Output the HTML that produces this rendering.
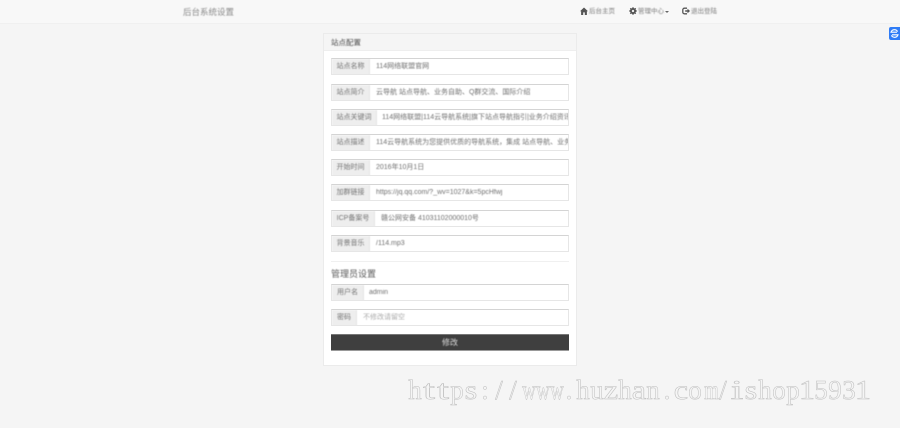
<!DOCTYPE html>
<html lang="zh">
<head>
<meta charset="utf-8">
<style>
html,body{margin:0;padding:0}
body{width:900px;height:428px;background:#f5f5f5;position:relative;overflow:hidden;font-family:"Liberation Sans","Noto Sans CJK SC",sans-serif;color:#666}
.a{position:absolute;white-space:nowrap}
.t{filter:blur(.45px)}
#nav{left:0;top:0;width:900px;height:23px;background:#f8f8f8;border-bottom:1px solid #f0f0f0}
#panel{left:323px;top:33px;width:252px;height:331px;background:#fff;border:1px solid #ebebeb}
#ph{left:324px;top:34px;width:252px;height:17px;background:#f5f5f5;border-bottom:1px solid #eeeeee;box-sizing:border-box;font-size:7.5px;line-height:17px;padding-left:7px;color:#4a4a4a}
.row{position:absolute;left:331px;width:238px;height:17px;box-sizing:border-box;border:1px solid #e6e6e6;border-top-color:#d4d4d4;background:#fff;overflow:hidden}
.lab{position:absolute;left:0;top:0;height:16px;background:#eeeeee;border-right:1px solid #e6e6e6;font-size:7px;line-height:16px;text-align:center;color:#747474;box-sizing:border-box;filter:blur(.45px)}
.val{position:absolute;top:0;font-size:7px;line-height:16px;color:#707070;white-space:nowrap;filter:blur(.45px)}
.nv{font-size:6.5px;color:#7c7c7c;top:7px;line-height:10px}
#wm{left:408px;top:376px;font-family:"Liberation Serif",serif;font-size:27px;line-height:28px;color:#f5f5f5;-webkit-text-stroke:.5px #bdbdbd}
#wm span{display:inline-block;width:14px;text-align:center}
#wm .n{transform:scaleX(.7)}
#wm .w1{transform:scaleX(1.6)}
#wm .w2{transform:scaleX(1.2)}
#wm .w3{transform:scaleX(1.7)}
</style>
</head>
<body>
<div id="nav" class="a"></div>
<div class="a t" style="left:183px;top:5px;font-size:8.5px;line-height:14px;color:#8a8a8a">后台系统设置</div>

<svg class="a" style="left:580px;top:7px" width="8" height="8" viewBox="0 0 8 8"><path d="M4 .5 0 4.2h1.1V8h2.1V5.4h1.6V8h2.1V4.2H8z" fill="#555"/></svg>
<div class="a t nv" style="left:589px">后台主页</div>
<svg class="a" style="left:629px;top:7px" width="8" height="8" viewBox="0 0 8 8"><circle cx="4" cy="4" r="2.3" fill="none" stroke="#555" stroke-width="1.6"/><path d="M4 0v8M0 4h8M1.2 1.2l5.6 5.6M6.8 1.2 1.2 6.8" stroke="#555" stroke-width="1"/><circle cx="4" cy="4" r="1.1" fill="#f8f8f8"/></svg>
<div class="a t nv" style="left:638px">管理中心</div>
<div class="a" style="left:665px;top:11px;width:0;height:0;border:2px solid transparent;border-top-color:#666;border-bottom:0"></div>
<svg class="a" style="left:682px;top:7px" width="8" height="8" viewBox="0 0 8 8"><path d="M5 1.2H2.4A1.6 1.6 0 0 0 .8 2.8v2.4a1.6 1.6 0 0 0 1.6 1.6H5" fill="none" stroke="#555" stroke-width="1.3"/><path d="M3.2 3.2h2.3V1.6L8 4 5.5 6.4V4.8H3.2z" fill="#555"/></svg>
<div class="a t nv" style="left:691px">退出登陆</div>

<div class="a" style="left:889px;top:27px;width:11px;height:13px;background:#2f7cf6;border-radius:2px 0 0 2px"></div>
<svg class="a" style="left:890px;top:29px" width="9" height="9" viewBox="0 0 9 9"><path d="M7.6 2.6A3.6 3.6 0 0 0 1 3.2h6M1.4 6.4A3.6 3.6 0 0 0 8 5.8H2" fill="none" stroke="#fff" stroke-width="1.1"/></svg>

<div id="panel" class="a"></div>
<div id="ph" class="a"><span class="t" style="display:inline-block">站点配置</span></div>

<div class="row" style="top:58px"><div class="lab" style="width:38px">站点名称</div><div class="val" style="left:44px">114网络联盟官网</div></div>
<div class="row" style="top:84px"><div class="lab" style="width:38px">站点简介</div><div class="val" style="left:44px">云导航 站点导航、业务自助、Q群交流、国际介绍</div></div>
<div class="row" style="top:109px"><div class="lab" style="width:45px">站点关键词</div><div class="val" style="left:50px">114网络联盟|114云导航系统|旗下站点导航指引|业务介绍资讯|E</div></div>
<div class="row" style="top:134px"><div class="lab" style="width:38px">站点描述</div><div class="val" style="left:44px">114云导航系统为您提供优质的导航系统，集成 站点导航、业务</div></div>
<div class="row" style="top:159px"><div class="lab" style="width:38px">开始时间</div><div class="val" style="left:44px">2016年10月1日</div></div>
<div class="row" style="top:184px"><div class="lab" style="width:38px">加群链接</div><div class="val" style="left:44px">https://jq.qq.com/?_wv=1027&amp;k=5pcHfwj</div></div>
<div class="row" style="top:210px"><div class="lab" style="width:43px">ICP备案号</div><div class="val" style="left:49px">赣公网安备 41031102000010号</div></div>
<div class="row" style="top:235px"><div class="lab" style="width:38px">背景音乐</div><div class="val" style="left:44px">/114.mp3</div></div>

<div class="a" style="left:331px;top:261px;width:238px;height:1px;background:#f0f0f0"></div>
<div class="a t" style="left:331px;top:268px;font-size:9px;line-height:12px;color:#5c5c5c">管理员设置</div>

<div class="row" style="top:284px"><div class="lab" style="width:32px">用户名</div><div class="val" style="left:37px">admin</div></div>
<div class="row" style="top:309px"><div class="lab" style="width:25px">密码</div><div class="val" style="left:31px;color:#aaa">不修改请留空</div></div>

<div class="a" style="left:331px;top:334px;width:238px;height:17px;background:#3f3f3f;border-top:1px solid #777;border-bottom:1px solid #999;box-sizing:border-box"></div>
<div class="a t" style="left:331px;top:334px;width:238px;height:17px;font-size:8px;line-height:17px;text-align:center;color:#ddd">修改</div>

<div id="wm" class="a"><span>h</span><span class="w1">t</span><span class="w1">t</span><span>p</span><span class="w2">s</span><span>:</span><span>/</span><span>/</span><span class="n">w</span><span class="n">w</span><span class="n">w</span><span>.</span><span>h</span><span>u</span><span class="w2">z</span><span>h</span><span class="w2">a</span><span>n</span><span>.</span><span class="w2">c</span><span>o</span><span class="n">m</span><span>/</span><span class="w3">i</span><span class="w2">s</span><span>h</span><span>o</span><span>p</span><span class="w2">1</span><span>5</span><span>9</span><span>3</span><span class="w2">1</span></div>
</body>
</html>
